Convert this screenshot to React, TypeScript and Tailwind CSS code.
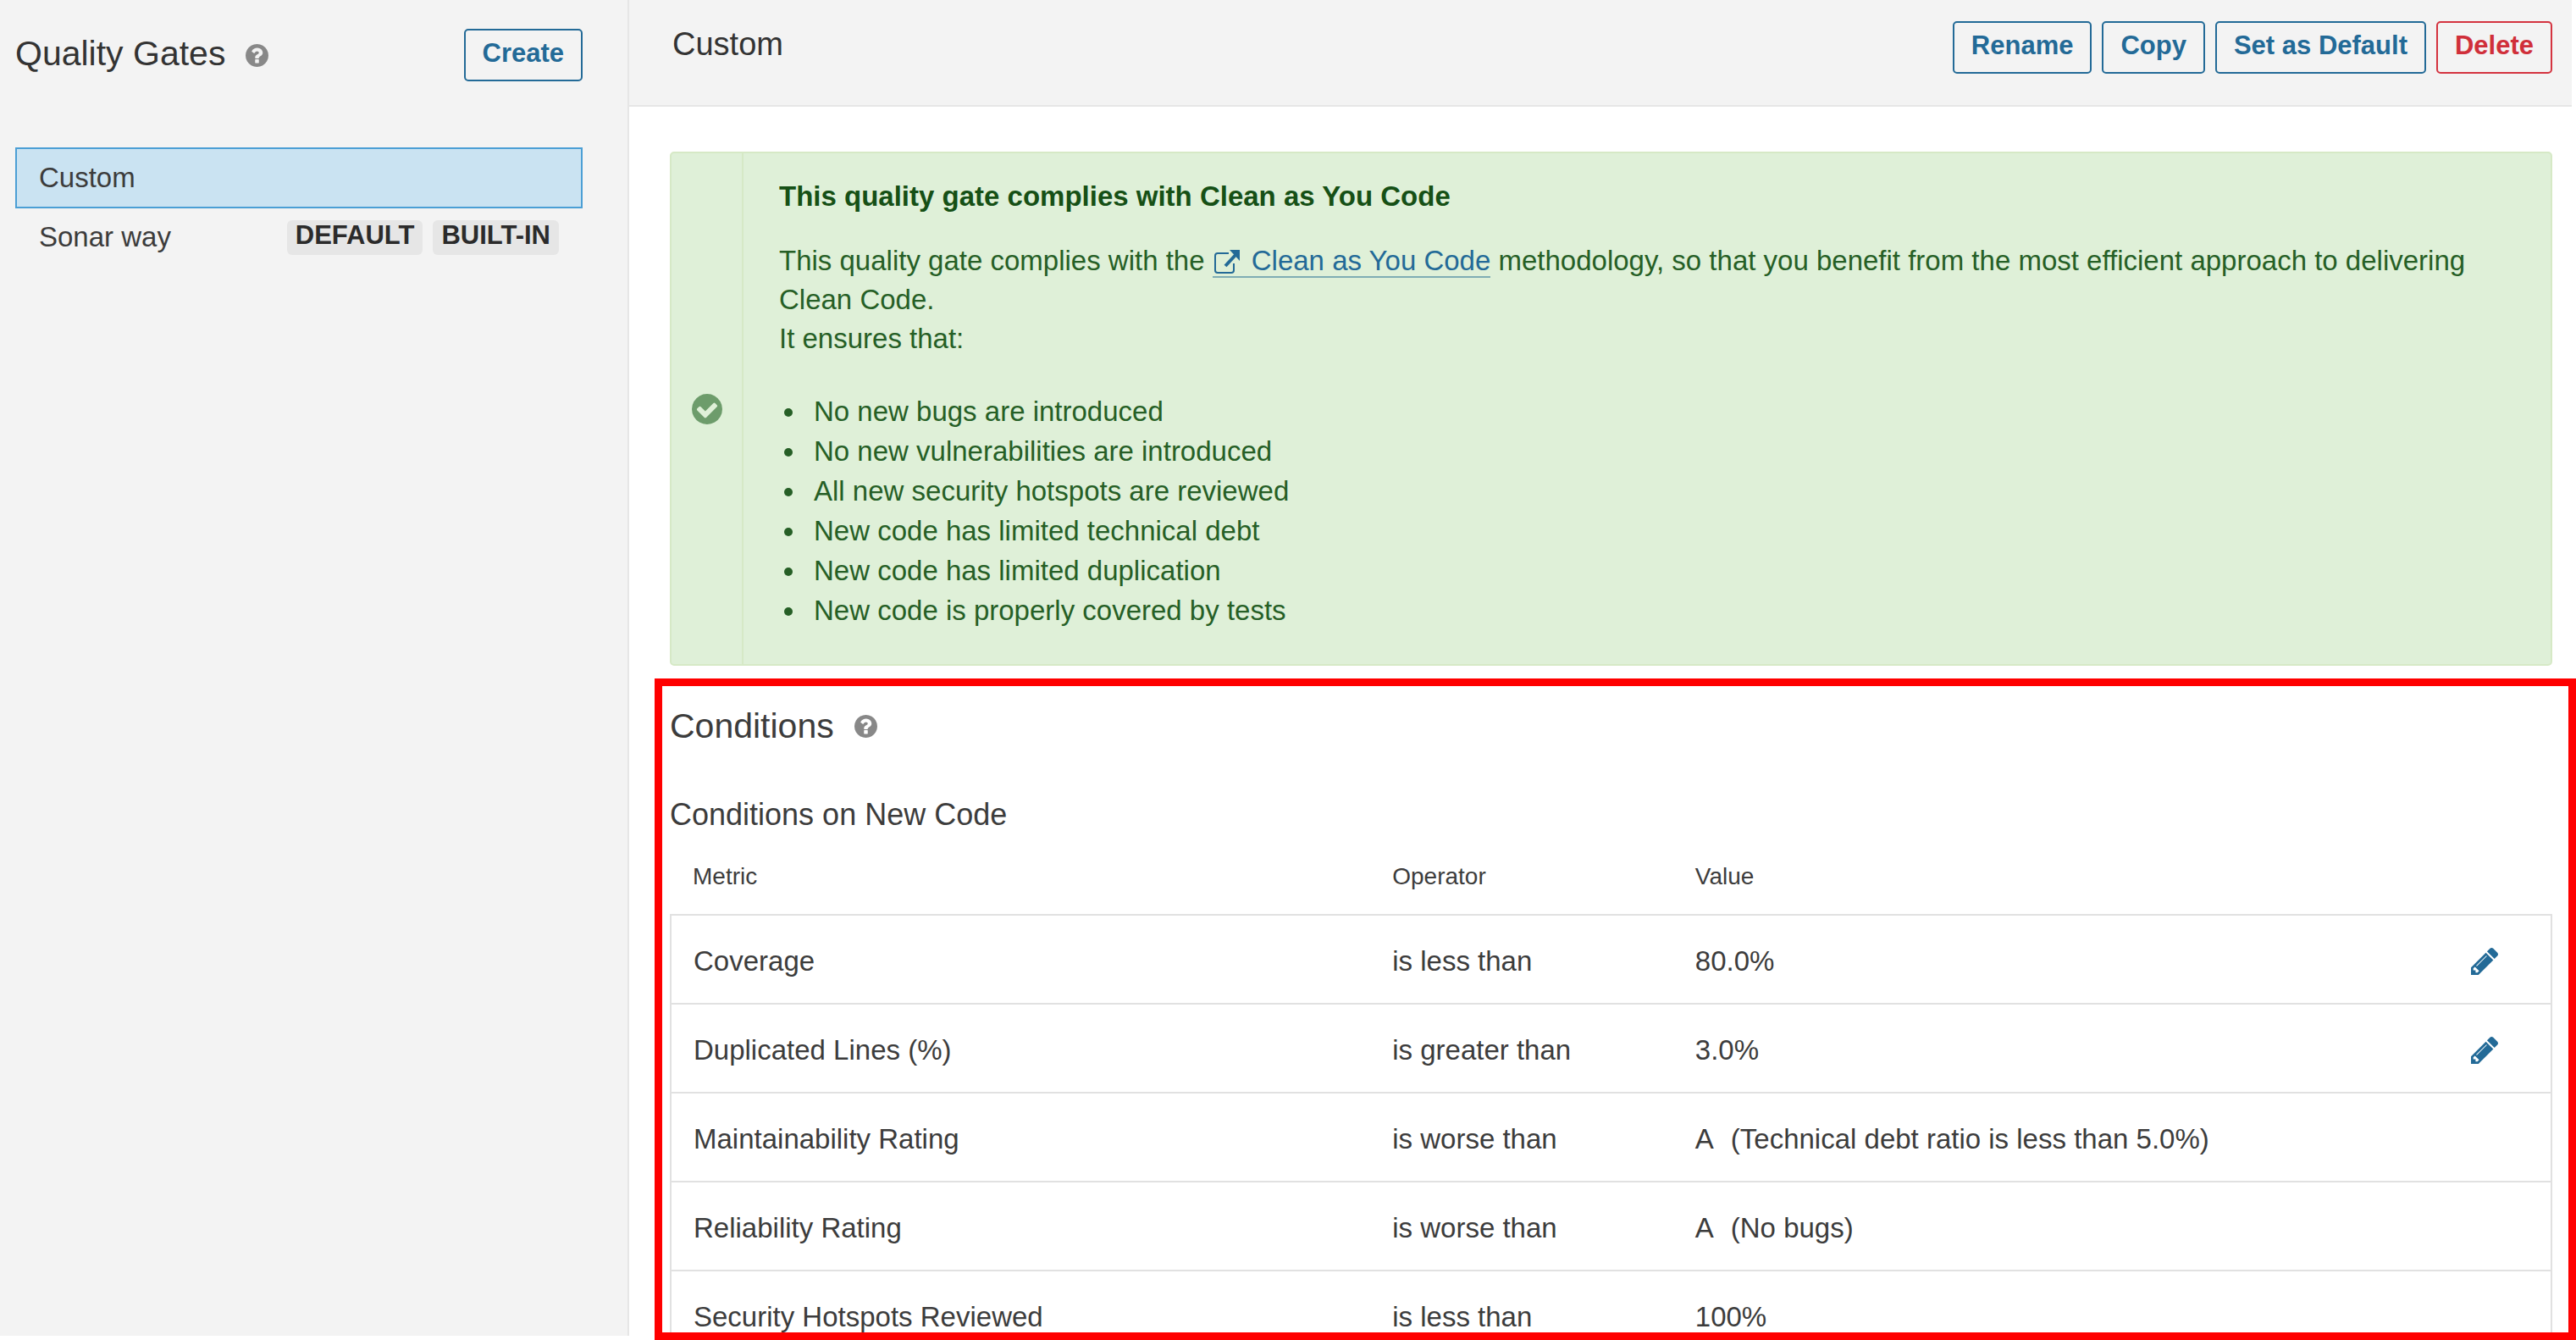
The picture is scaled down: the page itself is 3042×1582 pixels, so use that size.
import type { ReactNode } from "react";

const CIRCLE =
  "q0 209-103 385.5t-279.5 279.5-385.5 103-385.5-103-279.5-279.5-103-385.5 103-385.5 279.5-279.5 385.5-103 385.5 103 279.5 279.5 103 385.5z";

function HelpIcon() {
  return (
    <svg viewBox="128 128 1536 1536" className="size-[27px] fill-[#888888]" aria-hidden="true">
      <path
        d={
          "M1024 1376v-192q0-14-9-23t-23-9h-192q-14 0-23 9t-9 23v192q0 14 9 23t23 9h192q14 0 23-9t9-23zm256-672q0-88-55.5-163t-138.5-116-170-41q-243 0-371 213-15 24 8 42l132 100q7 6 19 6 16 0 25-12 53-68 86-92 34-24 86-24 48 0 85.5 26t37.5 59q0 38-20 61t-68 45q-63 28-115.5 86.5t-52.5 125.5v36q0 14 9 23t23 9h192q14 0 23-9t9-23q0-19 21.5-49.5t54.5-49.5q32-18 49-28.5t46-35 44.5-48 28-60.5 12.5-81zm384 192" +
          CIRCLE
        }
      />
    </svg>
  );
}

function CheckIcon() {
  return (
    <svg viewBox="128 128 1536 1536" className="size-9 fill-[#6d9c6b]" aria-hidden="true">
      <path
        d={
          "M1412 734q0-28-18-46l-91-90q-19-19-45-19t-45 19l-408 407-226-226q-19-19-45-19t-45 19l-91 90q-18 18-18 46 0 27 18 45l362 362q19 19 45 19 27 0 46-19l543-543q18-18 18-45zm252 162" +
          CIRCLE
        }
      />
    </svg>
  );
}

function PencilIcon() {
  return (
    <svg viewBox="128 149 1515 1515" className="size-8 fill-[#236a97]" aria-hidden="true">
      <path d="M491 1536l91-91-235-235-91 91v107h128v128h107zm523-928q0-22-22-22-10 0-17 7l-542 542q-7 7-7 17 0 22 22 22 10 0 17-7l542-542q7-7 7-17zm-54-192l416 416-832 832h-416v-416zm683 96q0 53-37 90l-166 166-416-416 166-165q36-38 90-38 53 0 91 38l235 234q37 39 37 91z" />
    </svg>
  );
}

function ExternalIcon() {
  return (
    <svg viewBox="0 0 34 30" className="mr-3 inline-block h-[30px] w-[34px] align-[-5px]" fill="none" aria-hidden="true">
      <path d="M19 5H6a3 3 0 0 0-3 3v17a3 3 0 0 0 3 3h16a3 3 0 0 0 3-3v-8" stroke="#236a97" strokeWidth="2" />
      <path d="M15 20 28 6" stroke="#236a97" strokeWidth="4" />
      <path d="M20 1h12v13z" fill="#236a97" />
    </svg>
  );
}

function Button({ children, danger = false }: { children: ReactNode; danger?: boolean }) {
  return (
    <button
      type="button"
      className={
        danger
          ? "h-[62px] rounded-[5px] border-2 border-[#d4333f] px-5 pb-[5px] text-[31px] font-bold text-[#d02f3a]"
          : "h-[62px] rounded-[5px] border-2 border-[#236a97] px-5 pb-[5px] text-[31px] font-bold text-[#236a97]"
      }
    >
      {children}
    </button>
  );
}

function Badge({ children }: { children: ReactNode }) {
  return (
    <span className="rounded-[6px] bg-[#e6e6e6] px-[10px] pb-[5px] text-[31px] leading-9 font-bold text-[#2b2b2b]">
      {children}
    </span>
  );
}

const guarantees = [
  "No new bugs are introduced",
  "No new vulnerabilities are introduced",
  "All new security hotspots are reviewed",
  "New code has limited technical debt",
  "New code has limited duplication",
  "New code is properly covered by tests",
];

const conditions = [
  { metric: "Coverage", operator: "is less than", value: "80.0%", editable: true },
  { metric: "Duplicated Lines (%)", operator: "is greater than", value: "3.0%", editable: true },
  {
    metric: "Maintainability Rating",
    operator: "is worse than",
    value: "A",
    note: "(Technical debt ratio is less than 5.0%)",
  },
  { metric: "Reliability Rating", operator: "is worse than", value: "A", note: "(No bugs)" },
  { metric: "Security Hotspots Reviewed", operator: "is less than", value: "100%" },
];

export default function App() {
  return (
    <div className="flex h-screen overflow-hidden bg-white font-['Liberation_Sans',Arial,sans-serif] text-[33px] leading-[46px] text-[#3c3c3c]">
      <aside className="mb-[5px] w-[743px] shrink-0 border-r-2 border-[#e6e6e6] bg-[#f3f3f3] pr-[53px] pl-[18px]">
        <div className="flex h-[130px] items-center justify-between">
          <div className="flex items-center gap-6">
            <h1 className="pb-1 text-[41px] text-[#333333]">Quality Gates</h1>
            <button type="button" aria-label="About quality gates">
              <HelpIcon />
            </button>
          </div>
          <Button>Create</Button>
        </div>
        <nav className="pt-11">
          <a href="#custom" className="flex h-[72px] items-center border-2 border-[#4b9fd5] bg-[#cae3f2] px-[26px]">
            Custom
          </a>
          <a href="#sonar-way" className="flex h-[68px] items-center px-7">
            <span className="grow">Sonar way</span>
            <span className="flex gap-3">
              <Badge>DEFAULT</Badge>
              <Badge>BUILT-IN</Badge>
            </span>
          </a>
        </nav>
      </aside>

      <main className="flex min-w-0 grow flex-col">
        <header className="mr-[5px] flex h-[126px] shrink-0 justify-between border-b-2 border-[#e6e6e6] bg-[#f3f3f3] pt-[25px] pr-[23px] pl-[51px]">
          <h2 className="pt-1 text-[38px] text-[#333333]">Custom</h2>
          <div className="flex gap-3">
            <Button>Rename</Button>
            <Button>Copy</Button>
            <Button>Set as Default</Button>
            <Button danger>Delete</Button>
          </div>
        </header>

        <div className="mt-[53px] mr-7 ml-12 flex shrink-0 rounded-[5px] border-2 border-[#d6e9c6] bg-[#dff0d8] text-[#265f26]">
          <div className="flex w-[85px] shrink-0 items-center justify-center border-r-2 border-[#d6e9c6]">
            <CheckIcon />
          </div>
          <div className="grow pt-7 pr-10 pb-10 pl-[42px]">
            <h3 className="font-bold text-[#165016]">This quality gate complies with Clean as You Code</h3>
            <p className="mt-[30px]">
              This quality gate complies with the{" "}
              <a href="#clean-as-you-code" className="border-b-2 border-[#7fadb4] text-[#236a97]">
                <ExternalIcon />
                Clean as You Code
              </a>{" "}
              methodology, so that you benefit from the most efficient approach to delivering Clean Code.
              <br />
              It ensures that:
            </p>
            <ul className="mt-[39px] list-disc pl-[33px] leading-[47px]">
              {guarantees.map((text) => (
                <li key={text} className="pl-2">
                  {text}
                </li>
              ))}
            </ul>
          </div>
        </div>

        <section className="mt-[15px] ml-[30px] min-h-0 grow overflow-hidden border-[9px] border-[#ff0000] pt-6 pr-[19px] pl-[9px]">
          <div className="flex items-center gap-6">
            <h2 className="text-[41px]">Conditions</h2>
            <button type="button" aria-label="About conditions">
              <HelpIcon />
            </button>
          </div>
          <h3 className="mt-[59px] text-[36px]">Conditions on New Code</h3>
          <table className="w-full table-fixed border-collapse text-left">
            <colgroup>
              <col className="w-[37.2%]" />
              <col className="w-[16.1%]" />
              <col />
              <col className="w-[160px]" />
            </colgroup>
            <thead className="text-[28px]">
              <tr className="h-[95px]">
                <th scope="col" className="px-[26px] pt-1.5 font-normal">Metric</th>
                <th scope="col" className="px-[26px] pt-1.5 font-normal">Operator</th>
                <th scope="col" className="px-[26px] pt-1.5 font-normal">Value</th>
                <td />
              </tr>
            </thead>
            <tbody className="border-2 border-[#e1e1e1]">
              {conditions.map((c) => (
                <tr key={c.metric} className="h-[105px] border-b-2 border-[#e1e1e1]">
                  <td className="px-[26px] pt-1">{c.metric}</td>
                  <td className="px-[26px] pt-1">{c.operator}</td>
                  <td className="px-[26px] pt-1">
                    {c.value}
                    {c.note && <span className="ml-5">{c.note}</span>}
                  </td>
                  <td className="pt-1 pr-[62px]">
                    {c.editable && (
                      <button type="button" aria-label={`Edit ${c.metric}`} className="ml-auto block">
                        <PencilIcon />
                      </button>
                    )}
                  </td>
                </tr>
              ))}
            </tbody>
          </table>
        </section>
      </main>
    </div>
  );
}
